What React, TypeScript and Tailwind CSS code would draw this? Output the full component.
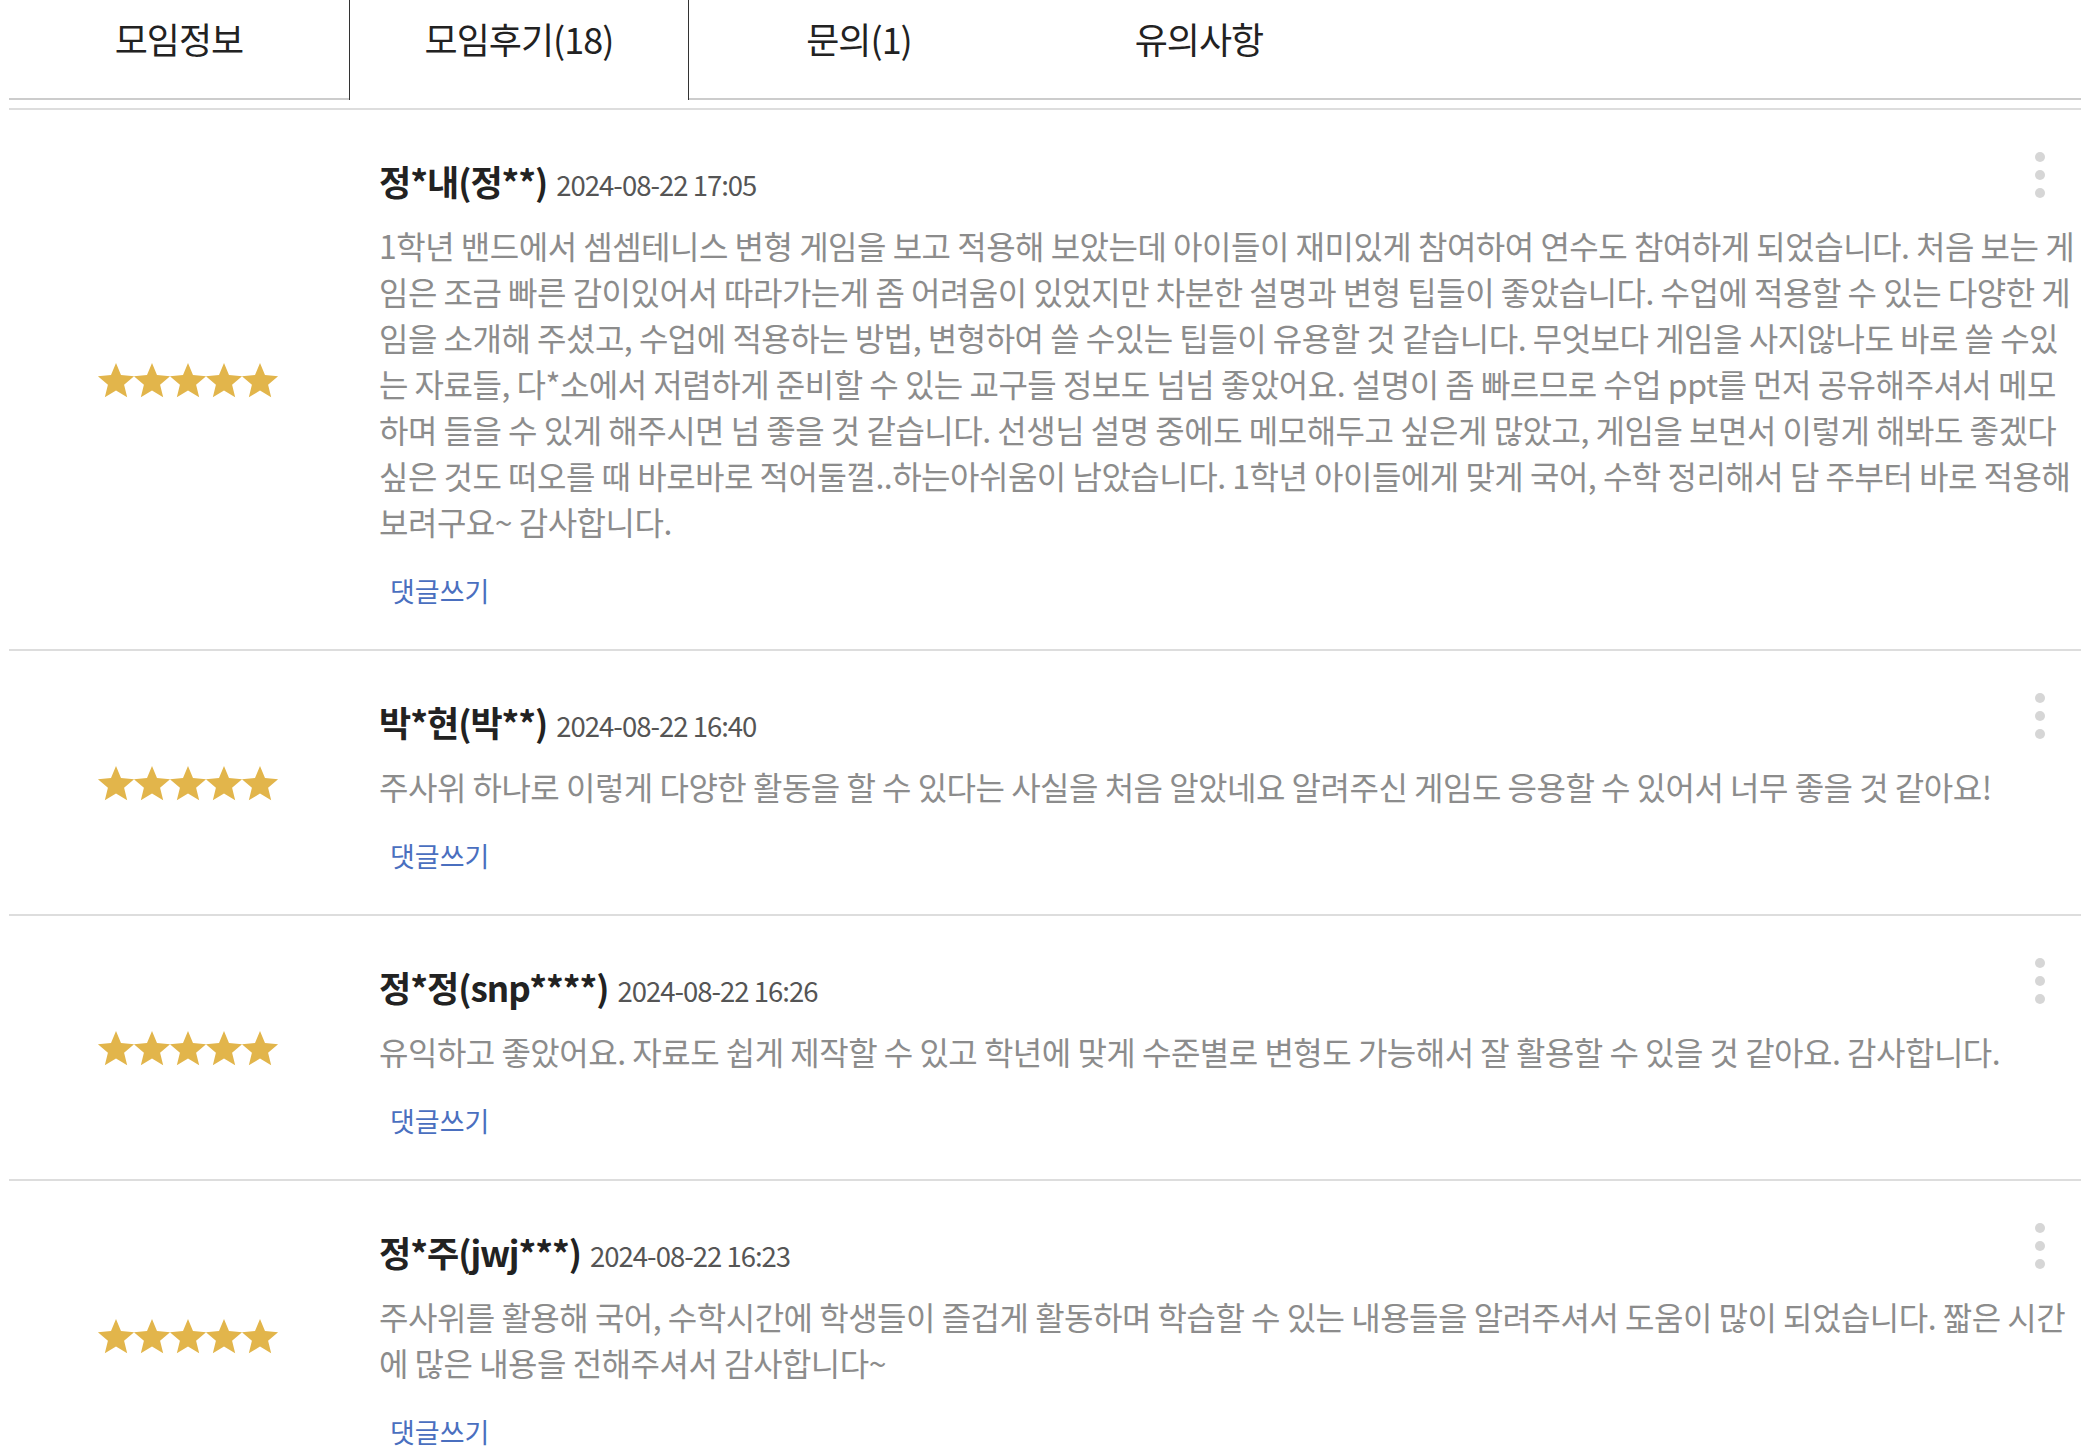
import React from "react";

const tabs = [
  { label: "모임정보", active: false },
  { label: "모임후기(18)", active: true },
  { label: "문의(1)", active: false },
  { label: "유의사항", active: false },
];

const reviews = [
  {
    name: "정*내(정**)",
    date: "2024-08-22 17:05",
    body:
      "1학년 밴드에서 셈셈테니스 변형 게임을 보고 적용해 보았는데 아이들이 재미있게 참여하여 연수도 참여하게 되었습니다. 처음 보는 게임은 조금 빠른 감이있어서 따라가는게 좀 어려움이 있었지만 차분한 설명과 변형 팁들이 좋았습니다. 수업에 적용할 수 있는 다양한 게임을 소개해 주셨고, 수업에 적용하는 방법, 변형하여 쓸 수있는 팁들이 유용할 것 같습니다. 무엇보다 게임을 사지않나도 바로 쓸 수있는 자료들, 다*소에서 저렴하게 준비할 수 있는 교구들 정보도 넘넘 좋았어요. 설명이 좀 빠르므로 수업 ppt를 먼저 공유해주셔서 메모하며 들을 수 있게 해주시면 넘 좋을 것 같습니다. 선생님 설명 중에도 메모해두고 싶은게 많았고, 게임을 보면서 이렇게 해봐도 좋겠다 싶은 것도 떠오를 때 바로바로 적어둘껄..하는아쉬움이 남았습니다. 1학년 아이들에게 맞게 국어, 수학 정리해서 담 주부터 바로 적용해 보려구요~ 감사합니다.",
  },
  {
    name: "박*현(박**)",
    date: "2024-08-22 16:40",
    body:
      "주사위 하나로 이렇게 다양한 활동을 할 수 있다는 사실을 처음 알았네요 알려주신 게임도 응용할 수 있어서 너무 좋을 것 같아요!",
  },
  {
    name: "정*정(snp****)",
    date: "2024-08-22 16:26",
    body:
      "유익하고 좋았어요. 자료도 쉽게 제작할 수 있고 학년에 맞게 수준별로 변형도 가능해서 잘 활용할 수 있을 것 같아요. 감사합니다.",
  },
  {
    name: "정*주(jwj***)",
    date: "2024-08-22 16:23",
    body:
      "주사위를 활용해 국어, 수학시간에 학생들이 즐겁게 활동하며 학습할 수 있는 내용들을 알려주셔서 도움이 많이 되었습니다. 짧은 시간에 많은 내용을 전해주셔서 감사합니다~",
  },
];

function Star() {
  return (
    <svg width="38" height="36" viewBox="0 0 38 36" className="-mx-px">
      <polygon
        fill="#E2B54B"
        points="19,1 23.99,13.12 37.07,14.13 27.09,22.63 30.17,35.37 19,28.5 7.83,35.37 10.91,22.63 0.93,14.13 14.01,13.12"
      />
    </svg>
  );
}

function Review({ r }: { r: (typeof reviews)[number] }) {
  return (
    <div className="relative flex border-b-2 border-[#ddd]">
      <div className="flex w-[358px] items-center justify-center">
        {[0, 1, 2, 3, 4].map((i) => (
          <Star key={i} />
        ))}
      </div>
      <div className="ml-[12px] flex-1 pr-[6px] pt-[48px] pb-[38px]">
        <div className="flex h-[46px] items-center">
          <span className="text-[35px] font-semibold tracking-[-1px] text-[#222]">{r.name}</span>
          <span className="ml-[9px] mt-[7px] text-[27.5px] tracking-[-1px] text-[#555]">{r.date}</span>
        </div>
        <p className="mt-[18px] break-all text-[32px] leading-[46px] tracking-[-0.5px] text-[#8c8c8c]">
          {r.body}
        </p>
        <div className="mt-[27px] pl-[11px] text-[27px] leading-[40px] text-[#4a6fbf]">
          댓글쓰기
        </div>
      </div>
      <div className="absolute right-[36px] top-[42px] flex flex-col gap-[8px]">
        <span className="h-[10px] w-[10px] rounded-full bg-[#d6d6d6]" />
        <span className="h-[10px] w-[10px] rounded-full bg-[#d6d6d6]" />
        <span className="h-[10px] w-[10px] rounded-full bg-[#d6d6d6]" />
      </div>
    </div>
  );
}

export default function App() {
  return (
    <div
      className="min-h-screen bg-white"
      style={{ fontFamily: '"Noto Sans CJK KR", "Noto Sans", sans-serif' }}
    >
      <div className="ml-[9px] w-[2072px]">
        <nav className="flex h-[100px]">
          {tabs.map((t) => (
            <div
              key={t.label}
              className={
                t.active
                  ? "flex w-[340px] justify-center border-x border-[#333] pt-[15px]"
                  : "flex w-[340px] justify-center border-b-2 border-[#ccc] pt-[15px]"
              }
            >
              <span className="text-[36px] leading-[46px] tracking-[-1px] text-[#222]">{t.label}</span>
            </div>
          ))}
          <div className="flex-1 border-b-2 border-[#ccc]" />
        </nav>
        <div className="mt-[8px] border-t-2 border-[#ddd]">
          {reviews.map((r) => (
            <Review key={r.name} r={r} />
          ))}
        </div>
      </div>
    </div>
  );
}
